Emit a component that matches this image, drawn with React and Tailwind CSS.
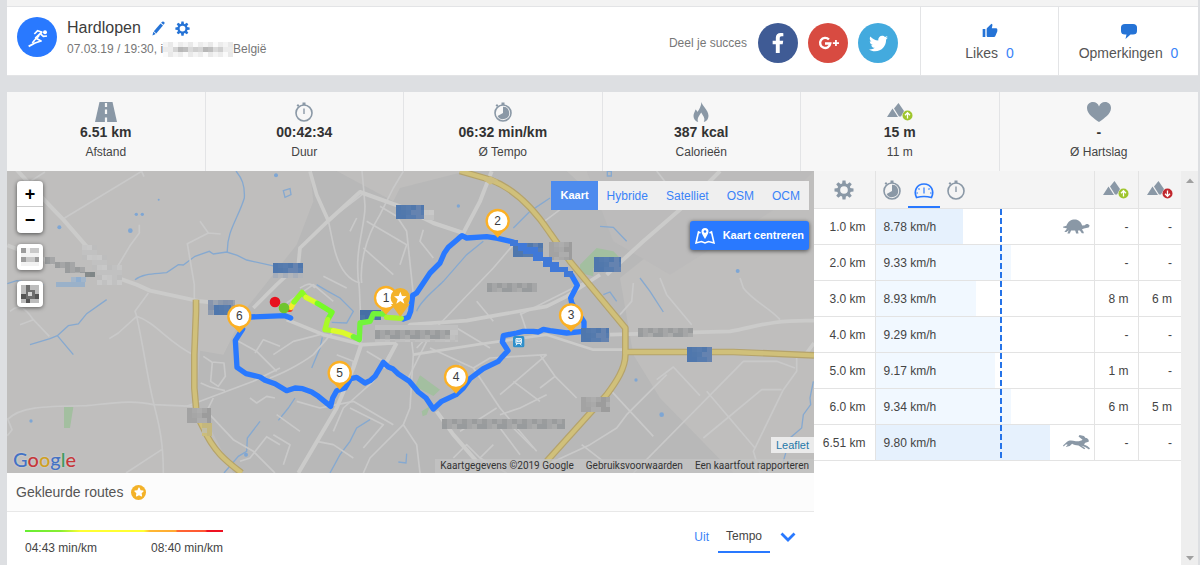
// App.jsx - activity detail page: header, key figures, route map and splits table
import React from "react";
import { FaFacebookF, FaTwitter, FaStar } from "react-icons/fa";
import { MdThumbUp } from "react-icons/md";

const splits = [
  { km: "1.0 km", speed: "8.78 km/h", bar: 40, up: "-", down: "-", animal: "turtle" },
  { km: "2.0 km", speed: "9.33 km/h", bar: 62, up: "-", down: "-" },
  { km: "3.0 km", speed: "8.93 km/h", bar: 46, up: "8 m", down: "6 m" },
  { km: "4.0 km", speed: "9.29 km/h", bar: 58, up: "-", down: "-" },
  { km: "5.0 km", speed: "9.17 km/h", bar: 55, up: "1 m", down: "-" },
  { km: "6.0 km", speed: "9.34 km/h", bar: 62, up: "6 m", down: "5 m" },
  { km: "6.51 km", speed: "9.80 km/h", bar: 80, up: "-", down: "-", animal: "hare" },
];

/* ---------- icons ---------- */

const GearIcon = ({ className }) => (
  <svg viewBox="0 0 24 24" className={className} aria-hidden="true">
    <circle cx="12" cy="12" r="6.4" fill="none" stroke="currentColor" strokeWidth="3.6" />
    {[0, 45, 90, 135, 180, 225, 270, 315].map((deg) => (
      <path
        key={deg}
        d="M9.6 5L10.2 0.6H13.8L14.4 5Z"
        fill="currentColor"
        transform={`rotate(${deg} 12 12)`}
      />
    ))}
  </svg>
);

const PencilIcon = ({ className }) => (
  <svg viewBox="0 0 14 16" className={className} fill="currentColor" aria-hidden="true">
    <path d="M11 0.6Q12.200 0 13.200 1Q14 2 13.300 2.900L12.300 4L9.800 1.800Z" />
    <path d="M9.200 2.500L11.800 4.800L4.600 13.300L2 11Z" />
    <path d="M1.500 11.600L4 13.900L0.500 15.500Z" />
  </svg>
);

const RunnerIcon = ({ className }) => (
  <svg
    viewBox="50 50 120 120"
    className={className}
    fill="none"
    stroke="#fff"
    strokeWidth="5"
    strokeLinejoin="round"
    aria-hidden="true"
  >
    <circle cx="134" cy="96" r="6" fill="#fff" stroke="none" />
    <path d="M102 101L112 91L126 96" />
    <path d="M125 95L106 113L122 122L104 128L85 138" strokeWidth="5.5" />
    <path d="M116 107L103 119L96 128" />
    <path d="M121 101L129 108L140 107" />
  </svg>
);

const RoadIcon = ({ className }) => (
  <svg viewBox="0 0 22 20" className={className} aria-hidden="true">
    <path d="M4.5 0H17.5L22 20H0Z" fill="currentColor" />
    <path d="M11 1V5M11 7.5V12M11 15.5V20" stroke="#f7f7f7" strokeWidth="2.2" />
  </svg>
);

const StopwatchIcon = ({ className, filled }) => (
  <svg viewBox="0 0 18 20" className={className} aria-hidden="true">
    <circle cx="9" cy="11" r="8" fill="none" stroke="currentColor" strokeWidth="1.6" />
    <path d="M7.5 0.5H10.5V3H7.5ZM1.5 3.4L3 2L4.4 3.4L3 4.8Z" fill="currentColor" />
    {filled ? (
      <path d="M9 4.8A6.2 6.2 0 1 1 3.6 14L9 11Z" fill="currentColor" />
    ) : (
      <path d="M9 6.5V12" stroke="currentColor" strokeWidth="1.4" />
    )}
  </svg>
);

const FlameIcon = ({ className }) => (
  <svg viewBox="0 0 16 20" className={className} fill="currentColor" aria-hidden="true">
    <path d="M8.5 0C9 4 15.5 8 15.5 14C15.5 17 13.5 19.4 10.8 20C12.4 16.5 10.6 14.4 8.2 10.5C6 14 3.6 16.8 5.2 20C2.3 19.2 0.5 17 0.5 14C0.5 11.5 1.8 10 2.5 7.5C3.6 8.2 4.2 9 4.3 10C6.5 7.5 8 4 8.5 0Z" />
  </svg>
);

const HeartIcon = ({ className }) => (
  <svg viewBox="0 0 24 20" className={className} fill="currentColor" aria-hidden="true">
    <path d="M12 20C7 16.5 0 12 0 6C0 2.5 2.5 0 6 0C9 0 11 1.6 12 4.5C13 1.6 15 0 18 0C21.5 0 24 2.5 24 6C24 12 17 16.5 12 20Z" />
  </svg>
);

const MountainIcon = ({ className, down }) => (
  <svg viewBox="0 0 26 18" className={className} aria-hidden="true">
    <path d="M0 14L5.5 5.5L11 14ZM7 5.5L11.5 0L17 8L14 13.5H12Z" fill="#8a98a6" />
    <circle cx="20.5" cy="12.5" r="5" fill={down ? "#c1272d" : "#9fc52d"} />
    <path
      d={down ? "M20.5 9.5V15M18 12.8L20.5 15.3L23 12.8" : "M20.5 15.5V10M18 12.2L20.5 9.7L23 12.2"}
      stroke="#fff"
      strokeWidth="1.3"
      fill="none"
    />
  </svg>
);

const GaugeIcon = ({ className }) => (
  <svg viewBox="0 0 20 16" className={className} fill="none" stroke="currentColor" aria-hidden="true">
    <path
      d="M2.5 14.5C-0.5 8 2.5 1 10 1C17.5 1 20.5 8 17.5 14.5Q10 12.5 2.5 14.5Z"
      strokeWidth="1.7"
    />
    <path d="M10 4.5V10.500M4.5 5.5L5.5 6.5M15.5 5.5L14.5 6.5M2.5 10H4M16 10H17.5" strokeWidth="1.2" />
  </svg>
);

const TurtleIcon = ({ className }) => (
  <svg viewBox="0 0 80 44" className={className} fill="currentColor" role="img" aria-label="Langzaamste">
    <path d="M0 23L10 20C15 6 24 1 35 1C46 1 53 8 57 19L65 18C68 13 76 14 79 20L76 25L62 28L56 31L60 36L62 42H56L50 34L44 34L46 43H39L36 34H24L20 43H13L17 33L10 38H4L12 28L0 25Z" />
  </svg>
);

const HareIcon = ({ className }) => (
  <svg viewBox="0 0 80 44" className={className} fill="currentColor" role="img" aria-label="Snelste">
    <path d="M0 31L12 20C18 14 28 16 38 18C46 19 52 18 58 14L46 4L49 0L62 3L67 9C73 9 78 15 76 20L66 23L62 28L72 32L80 39L77 43L67 36L54 31L66 39L63 42L46 31C38 30 32 30 27 26L20 32L8 35L14 29L9 27L2 34Z" />
  </svg>
);

const MapPinIcon = ({ className }) => (
  <svg viewBox="0 0 20 18" className={className} fill="none" stroke="#fff" strokeWidth="1.6" aria-hidden="true">
    <path d="M5.5 6L3.5 5L1 16L6.5 14.5L10 16L13.5 14.5L19 16L16.5 5L14.5 6" />
    <path d="M10 12C8.5 9 6.5 7 6.5 4.5A3.5 3.5 0 0 1 13.5 4.5C13.5 7 11.5 9 10 12Z" fill="#fff" stroke="none" />
    <circle cx="10" cy="4.5" r="1.3" fill="#2979ff" stroke="none" />
  </svg>
);

// Grid of flat squares that hides place names and road numbers
const Mosaic = ({ x, y, w, h, cell = 15, colors }) => {
  const cells = [];
  for (let r = 0; r * cell < h; r++) {
    for (let c = 0; c * cell < w; c++) {
      cells.push(
        <rect
          key={`${r}-${c}`}
          x={x + c * cell}
          y={y + r * cell}
          width={Math.min(cell, w - c * cell)}
          height={Math.min(cell, h - r * cell)}
          fill={colors[(r * 5 + c * 3 + ((r * c) % 4)) % colors.length]}
        />
      );
    }
  }
  return <g shapeRendering="crispEdges">{cells}</g>;
};

const BLUE = ["#4f77ad", "#577caf", "#6583b0", "#547aad", "#5178ac"];
const GREY = ["#a3a3a3", "#adadad", "#9c9c9c", "#a9a9a9", "#a6a6a6"];
const LABEL = ["#9a9c9d", "#abacac", "#939698", "#a5a6a7", "#b2b2b2", "#989b9d"];
const PALE = ["#c6c6c6", "#c1c1c1", "#bdbdbd", "#c8c8c8"];

/* ---------- map drawing ---------- */

const KmMarker = ({ x, y, label }) => (
  <g>
    <path d={`M${x - 26} ${y + 22}L${x} ${y + 50}L${x + 26} ${y + 22}Z`} fill="#fbb024" />
    <circle cx={x} cy={y} r="33" fill="#fff" stroke="#fbb024" strokeWidth="7" />
    <text x={x} y={y + 12} fontSize="36" textAnchor="middle" fill="#3c3c3c">
      {label}
    </text>
  </g>
);

const RouteMap = () => (
  <svg
    viewBox="21 9 2421 906"
    preserveAspectRatio="xMidYMid slice"
    className="block h-full w-full"
    role="img"
    aria-label="Kaart met route"
  >
    <rect x="-1000" y="-1000" width="5000" height="3000" fill="#bfbebd" />
    {/* built-up area */}
    <path
      d="M835 300L740 420L670 560L600 548L590 700L700 915H2200L1980 690L1900 560L1860 330L1960 250L1700 9H1400L1200 60L1180 100L1010 9H930L940 100L890 230Z"
      fill="#b8b8b8"
    />
    <path d="M2010 320L2330 120L2442 9H1760L1840 220Z" fill="#bcbbbb" />

    {/* parks */}
    <g fill="#a3bfa0">
      <path d="M192 717H220L210 780H192Z" />
      <path d="M1260 622L1320 665L1300 684L1245 655ZM1265 730L1290 715L1280 740L1268 745Z" />
      <path d="M1740 290L1790 240L1840 250L1860 270L1780 300L1780 325L1740 315Z" />
    </g>

    {/* water */}
    <g fill="none" stroke="#86a9d0" strokeWidth="4">
      <path d="M708 9C725 30 735 50 733 90C715 150 680 190 682 252" />
      <path d="M405 335C430 315 470 318 500 314L535 290L550 291L585 265L628 250L640 258L680 252L712 262L740 276L830 296" />
      <path d="M90 530L150 512L172 503L205 473L235 468L260 437L320 395M172 503L220 560" />
      <path d="M22 347L50 338L130 350" />
      <path d="M950 350L980 368L1020 390L1060 430L1040 465L995 463M967 508L960 540L935 600M885 690L865 720L835 757" />
      <path d="M1250 430C1260 400 1300 370 1330 340L1400 260L1450 220M1540 180L1590 130L1650 90" />
      <path d="M1110 755L1070 780L1050 820L1020 860L990 915M1220 857L1218 885L1195 882" />
      <path d="M1800 175L1840 178L1880 220M1920 330L1950 370L1990 432M1810 380L1830 372L1850 400" />
      <path d="M2440 640L2430 690L2432 710L2410 740L2405 780L2370 810L2350 880" />
      <path d="M672 915L715 865L740 850L742 810L780 760" />
      <path d="M850 68L870 62L873 80L855 88ZM1822 10h12v14h-12Z" />
    </g>
    <g fill="#7ea6d4">
      <circle cx="178" cy="178" r="6" />
      <circle cx="409" cy="139" r="5" />
      <circle cx="427" cy="139" r="5" />
      <circle cx="391" cy="188" r="7" />
      <circle cx="476" cy="95" r="3" />
      <circle cx="93" cy="759" r="5" />
      <circle cx="828" cy="22" r="6" />
      <circle cx="1375" cy="114" r="5" />
      <circle cx="2213" cy="309" r="6" />
      <circle cx="1985" cy="740" r="7" />
      <circle cx="1908" cy="636" r="5" />
      <circle cx="738" cy="860" r="6" />
    </g>

    {/* minor roads */}
    <g fill="none" stroke="#c9c9c9" strokeWidth="5" strokeLinejoin="round">
      <path d="M60 60L135 12M190 152L425 10L432 26M418 170V195L392 230L350 300M600 160L625 195L662 198M625 195L562 227L583 350V395" />
      <path d="M445 375L405 430L410 445L355 495L328 512M410 445C470 465 500 520 580 560M410 445C435 560 440 620 462 710C480 780 490 830 490 915M485 845L378 915M30 430C60 405 75 420 100 455L148 505M60 470L100 455" />
      <path d="M22 755C60 715 130 715 260 713C340 705 400 695 460 710L580 715M22 750L36 785L22 803" />
      <path d="M610 565L635 582L672 585L676 625L655 655L632 640L637 582M602 645L630 657L675 668M715 520L770 550L830 610M765 555L790 515L840 535M840 600L760 640L560 715" />
      <path d="M640 690L620 730L700 815L760 850L825 915M720 880L750 870L800 806L840 830M750 690L770 705L800 685L825 690" />
      <path d="M985 158L1060 100L1092 75L1086 9M1092 75L1095 115C1095 180 1060 250 1078 360L1085 520M1210 10L1180 60L1140 140C1090 220 1080 300 1085 345M1100 160L1220 230L1200 290M1070 150L1050 190M1090 240L1180 320M985 158L1000 230C1020 320 1060 340 1080 345" />
      <path d="M1140 115L1190 145L1220 190L1240 380M1270 185L1260 220L1300 270M900 360C920 350 930 340 945 360M860 405L940 350L1000 400M970 325L1040 360M1000 490L940 560C900 590 840 620 810 630M890 700L960 720L1060 700L1180 770M820 560L880 520L960 500" />
      <path d="M1010 560L1060 580L1050 640M1100 550L1150 580M1180 540L1120 640L1030 720L1000 790M1230 480L1240 560L1230 720L1210 770L1110 870L1090 915M1210 770L1250 830L1260 915M1050 720L1150 770L1090 840M950 820L1000 830L1060 870M820 800L870 830L850 890M830 740L900 790" />
      <path d="M1300 480L1250 580L1220 640M1290 540L1420 600L1500 720L1610 850M1420 600L1470 570L1640 560M1500 680L1640 560M1490 720L1380 790M1380 590L1340 650M1540 640L1620 700M1500 740L1560 720L1640 680M1470 540L1370 480" />
      <path d="M1540 230L1480 300L1250 540M1600 260L1640 290M1430 400L1480 460M1560 430L1580 490M1560 440L1760 340M1360 870L1400 830L1470 900M1480 830L1440 870L1520 915M1500 780L1560 860M1520 760L1600 840" />
      <path d="M1620 170L1700 110L1770 40M1970 9L2010 60L2060 100M1900 345L1895 400L1860 440M1980 330L2000 380L2075 470M2220 330L2230 360C2260 400 2310 420 2340 455" />
      <path d="M1620 560L1665 625L1730 690M1620 660L1665 625M1830 665L1960 805M1900 915L2230 580H2330L2385 600M1970 635L2020 597L2100 683M2120 670L2265 840M2110 810L2285 665H2345M2390 570V610L2350 665L2260 850L2280 915M1745 830L1810 880M1640 890L1770 830L1850 780L1880 740L2000 620" />
    </g>

    {/* main roads */}
    <g fill="none" stroke="#cbcbca" strokeLinejoin="round">
      <path d="M50 5C100 60 130 95 190 155L290 270L340 325L410 350L450 368L600 400L690 408M22 232L160 285" strokeWidth="12" />
      <path d="M930 10L950 80L985 158L900 240L895 290L830 350L760 420" strokeWidth="11" />
      <path d="M985 158L1080 72L1200 115L1300 165L1390 195L1440 100L1475 10" strokeWidth="12" />
      <path d="M860 455L970 500L1090 530L1180 525L1230 470L1400 458L1500 440L1640 415L1700 385L1800 320" strokeWidth="11" />
      <path d="M1085 525L1060 600L1010 720L895 915M1190 525L1150 600" strokeWidth="12" />
      <path d="M1240 560L1430 530L1640 500L1780 545H1870" strokeWidth="8" />
      <path d="M1820 320L1930 220L2080 90L2160 9" strokeWidth="12" />
      <path d="M1830 500L2190 490C2260 480 2300 455 2442 458M2420 555L2442 525" strokeWidth="11" />
      <path d="M1310 730L1360 800L1430 880" strokeWidth="12" />
    </g>

    {/* highways */}
    <g fill="none" strokeLinejoin="round">
      <g stroke="#b5a36b" strokeWidth="20">
        <path d="M588 395V430L583 560V660L590 740L610 780C640 850 680 880 725 915" />
        <path d="M1380 9L1470 35C1540 60 1600 120 1650 195L1710 280L1876 480V560C1876 600 1850 640 1820 680L1640 880" />
        <path d="M1870 552H2200L2442 562" />
      </g>
      <g stroke="#d0c07a" strokeWidth="13">
        <path d="M588 395V430L583 560V660L590 740L610 780C640 850 680 880 725 915" />
        <path d="M1380 9L1470 35C1540 60 1600 120 1650 195L1710 280L1876 480V560C1876 600 1850 640 1820 680L1640 880" />
        <path d="M1870 552H2200L2442 562" />
      </g>
    </g>
    <path d="M1450 35L1470 25L1495 37L1470 50Z" fill="#cdbd80" />

    {/* hidden place names */}
    <Mosaic x={245} y={230} w={45} h={45} colors={PALE} />
    <Mosaic x={275} y={260} w={45} h={45} colors={PALE} />
    <Mosaic x={290} y={290} w={75} h={60} colors={PALE} />
    <Mosaic x={135} y={268} w={30} h={20} colors={LABEL} />
    <Mosaic x={165} y={283} w={60} h={16} colors={LABEL} />
    <Mosaic x={195} y={298} w={60} h={16} colors={LABEL} />
    <Mosaic x={255} y={312} w={30} h={15} colors={["#858a8b", "#7f8687"]} />
    <Mosaic x={167} y={342} w={88} h={15} colors={["#9ab1c9", "#a0b5cb", "#91acca"]} />
    <Mosaic x={212} y={327} w={45} h={15} colors={["#a3b6ca", "#8faed0"]} />
    <Mosaic x={625} y={397} w={80} h={43} colors={["#8795ad", "#8493ac", "#8c99ad", "#9aa3b1"]} />
    <Mosaic x={642} y={412} w={50} h={28} colors={BLUE} />
    <Mosaic x={560} y={720} w={74} h={45} colors={GREY} />
    <Mosaic x={605} y={765} w={30} h={38} colors={["#c4b77d", "#cbbd7c", "#c1bda5"]} />
    <Mosaic x={820} y={285} w={88} h={30} colors={BLUE} />
    <Mosaic x={820} y={315} w={88} h={15} colors={["#a7aeb9", "#b2b5ba"]} />
    <Mosaic x={1188} y={110} w={84} h={44} colors={BLUE} />
    <Mosaic x={1272} y={125} w={30} h={30} colors={PALE} />
    <Mosaic x={1080} y={426} w={64} h={30} colors={["#456fa5", "#6f8eaa", "#4b76a8"]} />
    <Mosaic x={1125} y={471} w={250} h={50} colors={["#c0c0c0", "#bcbcbc", "#c3c3c3"]} />
    <Mosaic x={1125} y={486} w={225} h={26} colors={LABEL} />
    <Mosaic x={1462} y={345} w={148} h={28} colors={LABEL} />
    <Mosaic x={1325} y={754} w={370} h={28} colors={LABEL} />
    <Mosaic x={1647} y={222} w={70} h={55} colors={GREY} />
    <Mosaic x={1782} y={267} w={82} h={44} colors={BLUE} />
    <Mosaic x={1915} y={480} w={165} h={28} colors={LABEL} />
    <Mosaic x={2062} y={538} w={74} h={43} colors={BLUE} />
    <Mosaic x={1743} y={688} w={88} h={44} colors={GREY} />
    <Mosaic x={1540} y={225} w={90} h={42} colors={BLUE} />

    {/* route without colouring */}
    <g fill="none" stroke="#2979ff" strokeWidth="16" strokeLinejoin="round" strokeLinecap="round">
      <path d="M872 450L855 443L750 447M728 483L706 517L711 598L738 617L780 627L795 637L825 647L860 668L885 660L908 662L935 672L955 685L992 715L998 690L1010 668L1035 660L1052 632L1070 628L1095 645L1110 638L1125 625L1150 583L1165 597L1178 602L1195 618L1228 640L1255 672L1278 690L1300 723L1325 700L1368 680L1390 660L1410 632L1450 602L1495 580L1505 568L1524 548L1507 522L1510 503L1550 495L1570 490L1600 490L1615 492L1630 484L1650 488L1700 495L1752 490V462L1715 405L1712 390L1732 352L1715 322" />
      <path d="M1540 222L1493 211L1460 206L1400 210L1386 203L1375 212L1345 238L1333 255L1320 285L1290 315L1250 375L1238 382L1232 430L1225 448L1210 453" />
    </g>
    <g fill="#4079d8" shapeRendering="crispEdges">
      <rect x="1530" y="215" width="25" height="20" />
      <rect x="1555" y="225" width="25" height="25" />
      <rect x="1570" y="237" width="45" height="20" />
      <rect x="1600" y="252" width="30" height="28" />
      <rect x="1630" y="268" width="25" height="28" />
      <rect x="1650" y="283" width="27" height="28" />
      <rect x="1677" y="297" width="28" height="15" />
      <rect x="1692" y="310" width="28" height="18" />
    </g>
    <Mosaic x={1742} y={480} w={84} h={43} colors={BLUE} />

    {/* coloured first kilometre */}
    <g fill="none" strokeWidth="16" strokeLinecap="round" strokeLinejoin="round">
      <path d="M865 424L870 424" stroke="#f33b25" />
      <path d="M873 418L882 402" stroke="#f4ec2b" />
      <path d="M882 402L906 373L918 388" stroke="#8dfa26" />
      <path d="M918 388L950 405" stroke="#d8fb2a" />
      <path d="M952 406L996 433L985 452" stroke="#75fb27" />
      <path d="M983 455L975 485L1000 488" stroke="#a9fb28" />
      <path d="M1000 488L1030 494L1060 506" stroke="#dcfb2b" />
      <path d="M1060 506L1078 515L1080 465L1110 460L1120 437L1152 438" stroke="#72f53a" />
      <path d="M1160 448L1204 451" stroke="#a6f52c" />
    </g>
    <circle cx="825" cy="402" r="16" fill="#e8121f" />
    <circle cx="852" cy="420" r="16" fill="#6fc52f" />

    {/* railway station */}
    <g>
      <rect x="1539" y="504" width="34" height="34" rx="5" fill="#2e8fcb" />
      <path d="M1548 512H1564V526H1548ZM1551 516H1561V521H1551ZM1548 532L1552 527M1564 532L1560 527" fill="none" stroke="#fff" strokeWidth="3" />
    </g>

    <KmMarker x={1158} y={390} label="1" />
    <path d="M1173 408L1201 447L1229 408Z" fill="#f3b229" />
    <circle cx="1201" cy="389" r="29" fill="#f3b229" />
    <path d="M1201 371L1206 384L1220 385L1209 394L1213 407L1201 399L1189 407L1193 394L1182 385L1196 384Z" fill="#fff" />
    <KmMarker x={1493} y={159} label="2" />
    <KmMarker x={1713} y={442} label="3" />
    <KmMarker x={1368} y={627} label="4" />
    <KmMarker x={1019} y={615} label="5" />
    <KmMarker x={718} y={445} label="6" />
  </svg>
);

const mapTypes = ["Kaart", "Hybride", "Satelliet", "OSM", "OCM"];

const MapPanel = () => (
  <section className="relative h-[302px] overflow-hidden bg-[#bfbebd]">
    <RouteMap />

    {/* zoom + view controls */}
    <div className="absolute top-2.5 left-2.5 flex w-[26px] flex-col gap-[11px]">
      <div className="flex flex-col overflow-hidden rounded bg-white shadow-[0_1px_4px_rgba(0,0,0,0.6)]">
        <button className="h-[26px] border-b border-[#ccc] text-lg/6 font-bold text-black" aria-label="Inzoomen">
          +
        </button>
        <button className="h-[26px] text-lg/6 font-bold text-black" aria-label="Uitzoomen">
          −
        </button>
      </div>
      <button className="h-[26px] rounded bg-white p-1 shadow-[0_1px_4px_rgba(0,0,0,0.5)]" aria-label="Volledig scherm">
        <svg viewBox="0 0 60 60" className="h-[18px] w-[18px]" shapeRendering="crispEdges" aria-hidden="true">
          <rect width="60" height="60" fill="#f2f2f2" />
          <path d="M0 0H15V15H0ZM0 30H15V45H0ZM45 30H60V45H45Z" fill="#9c9c9c" />
          <path d="M30 0H60V15H30ZM30 30H45V45H30ZM15 30H30V45H15Z" fill="#c9c9c9" />
        </svg>
      </button>
      <button className="h-[26px] rounded bg-white p-1 shadow-[0_1px_4px_rgba(0,0,0,0.5)]" aria-label="Instellingen kaart">
        <svg viewBox="0 0 60 60" className="h-[18px] w-[18px]" shapeRendering="crispEdges" aria-hidden="true">
          <rect width="60" height="60" fill="#bdbdbd" />
          <path d="M15 0H30V15H45V45H30V60H15V45H0V30H15V15H15Z" fill="#6e6e6e" />
          <path d="M0 30H15V45H0ZM15 45H30V60H15ZM45 30H60V45H45Z" fill="#555" />
          <path d="M22 22H38V38H22Z" fill="#d6d6d6" />
        </svg>
      </button>
    </div>

    <div className="absolute top-2.5 right-[5px] flex flex-col items-end gap-[11px]">
      <div className="flex bg-[#efefef] text-xs">
        {mapTypes.map((type, i) => (
          <button
            key={type}
            className={
              i === 0
                ? "h-[29px] bg-[#4d8bee] px-[9px] text-[11px] font-bold text-white"
                : "h-[29px] px-[9px] text-[#3a83f8]"
            }
          >
            {type}
          </button>
        ))}
      </div>
      <button className="flex h-[29px] items-center gap-2 rounded-[3px] bg-[#2979ff] px-[5px] text-[11px] font-bold text-white shadow-[0_1px_4px_rgba(0,0,0,0.6)]">
        <MapPinIcon className="h-[18px] w-5" />
        Kaart centreren
      </button>
    </div>

    <a
      href="#google"
      className="absolute bottom-0.5 left-1.5 font-[Lato,sans-serif] text-xl/6 font-medium [text-shadow:0_0_2px_#ddd]"
    >
      <span className="text-[#4472c4]">G</span>
      <span className="text-[#c5373a]">o</span>
      <span className="text-[#cf9f22]">o</span>
      <span className="text-[#4472c4]">g</span>
      <span className="text-[#3f9b60]">l</span>
      <span className="text-[#c5373a]">e</span>
    </a>
    <a
      href="#leaflet"
      className="absolute right-0 bottom-5 bg-[#ebebeb] px-[5px] text-[11px]/4 text-[#1f78a8]"
    >
      Leaflet
    </a>
    <div className="absolute right-0 bottom-0 flex gap-3 bg-[#c4c4c4]/70 px-[5px] font-[Roboto,sans-serif] text-[10px]/[14px] text-[#333]">
      <span>Kaartgegevens ©2019 Google</span>
      <a href="#voorwaarden">Gebruiksvoorwaarden</a>
      <a href="#fout">Een kaartfout rapporteren</a>
    </div>
  </section>
);

/* ---------- page parts ---------- */

const Header = () => (
  <header className="flex h-[70px] border-y border-[#e3e4e6] bg-white">
    <div className="flex flex-1 gap-2.5 pt-2.5 pl-2.5">
      <div className="h-10 w-10 rounded-full bg-[#2979ff]">
        <RunnerIcon className="h-10 w-10" />
      </div>
      <div>
        <div className="flex h-[22px] items-center">
          <h1 className="text-base text-[#3c3c3c]">Hardlopen</h1>
          <button className="ml-[11px] text-[#2573d6]" aria-label="Bewerken">
            <PencilIcon className="h-[15px] w-[13px]" />
          </button>
          <button className="ml-2.5 text-[#2573d6]" aria-label="Instellingen">
            <GearIcon className="h-[15px] w-[15px]" />
          </button>
        </div>
        <p className="flex h-5 items-center text-xs text-[#777]">
          <span>07.03.19 / 19:30, i</span>
          <svg viewBox="0 0 210 45" className="h-[15px] w-[70px]" aria-hidden="true">
            <Mosaic x={0} y={0} w={210} h={45} colors={["#f4f4f4", "#ececec", "#fafafa", "#e9e9e9"]} />
            <Mosaic x={30} y={15} w={150} h={15} colors={["#d5d5d5", "#bfbfbf", "#cfcfcf", "#b8b8b8", "#dadada"]} />
          </svg>
          <span>België</span>
        </p>
      </div>
    </div>
    <div className="flex items-center gap-2.5 pt-1 pr-[22px]">
      <span className="mr-px text-xs text-[#777]">Deel je succes</span>
      <button className="flex h-10 w-10 items-center justify-center rounded-full bg-[#3f5b95] text-white" aria-label="Facebook">
        <FaFacebookF size={20} />
      </button>
      <button className="flex h-10 w-10 items-center justify-center rounded-full bg-[#d84b41]" aria-label="Google Plus">
        <svg viewBox="0 0 24 16" className="h-[14px] w-[21px]" fill="none" stroke="#fff" strokeWidth="2.8" aria-hidden="true">
          <path d="M12.5 4A5.8 5.8 0 1 0 14 8.5H8" />
          <path d="M20.5 4.5V11.5M17 8H24" strokeWidth="2" />
        </svg>
      </button>
      <button className="flex h-10 w-10 items-center justify-center rounded-full bg-[#43aade] text-white" aria-label="Twitter">
        <FaTwitter size={19} />
      </button>
    </div>
    <button className="flex w-[138px] flex-col items-center gap-1 border-l border-[#e3e4e6] pt-4 text-sm/5 text-[#555]">
      <MdThumbUp size={16} className="text-[#2573d6]" />
      <span>
        Likes <span className="ml-1 text-[#3a83f8]">0</span>
      </span>
    </button>
    <button className="flex w-[140px] flex-col items-center gap-1 border-l border-[#e3e4e6] pt-4 text-sm/5 text-[#555]">
      <svg viewBox="0 0 16 16" className="h-4 w-4 text-[#2573d6]" fill="currentColor" aria-hidden="true">
        <path d="M4 1H12Q16 1 16 4.5V8Q16 11.500 12 11.500H9.500L4.500 16L5.500 11.500H4Q0 11.500 0 8V4.500Q0 1 4 1Z" />
      </svg>
      <span>
        Opmerkingen <span className="ml-1 text-[#3a83f8]">0</span>
      </span>
    </button>
  </header>
);

const stats = [
  { icon: <RoadIcon className="h-5 w-[22px]" />, value: "6.51 km", label: "Afstand" },
  { icon: <StopwatchIcon className="h-5 w-[18px]" />, value: "00:42:34", label: "Duur" },
  { icon: <StopwatchIcon filled className="h-5 w-[18px]" />, value: "06:32 min/km", label: "Ø Tempo" },
  { icon: <FlameIcon className="h-5 w-4" />, value: "387 kcal", label: "Calorieën" },
  { icon: <MountainIcon className="h-[18px] w-[26px]" />, value: "15 m", label: "11 m" },
  { icon: <HeartIcon className="h-5 w-6" />, value: "-", label: "Ø Hartslag" },
];

const StatsBar = () => (
  <section className="grid grid-cols-6 divide-x divide-[#e3e4e6] bg-[#f7f7f7]">
    {stats.map((s) => (
      <div key={s.label} className="flex flex-col items-center pt-2.5 pb-[9px] text-center">
        <div className="flex h-5 items-center text-[#8a98a6]">{s.icon}</div>
        <strong className="text-sm/5 text-[#333]">{s.value}</strong>
        <span className="text-xs/5 text-[#444]">{s.label}</span>
      </div>
    ))}
  </section>
);

const ColoredRoutes = () => (
  <section className="flex-1 bg-white">
    <h2 className="flex h-[39px] items-center gap-2 border-b border-[#e8e8e8] bg-[#fcfcfc] pl-[9px] text-sm text-[#555]">
      Gekleurde routes
      <span className="flex h-[15px] w-[15px] items-center justify-center rounded-full bg-[#f3b229] text-white">
        <FaStar size={10} />
      </span>
    </h2>
    <div className="flex items-start justify-between px-[18px] text-xs text-[#444]">
      <div className="w-[198px] pt-[18px]">
        <div className="h-0.5 bg-[linear-gradient(to_right,#66ee33_0%,#88ee33_18%,#ffff33_28%,#ffff33_60%,#ffb833_63%,#ffa933_76%,#ff6633_77%,#ff5533_91%,#ee1122_92%)]" />
        <div className="mt-2 flex justify-between">
          <span>04:43 min/km</span>
          <span>08:40 min/km</span>
        </div>
      </div>
      <div className="flex items-center pt-2">
        <button className="h-8 px-[9px] text-[#3a83f8]">Uit</button>
        <button className="h-[33px] border-b-2 border-[#2979ff] px-2">Tempo</button>
        <button className="ml-2.5 text-[#2979ff]" aria-label="Meer">
          <svg viewBox="0 0 16 12" className="h-3 w-4" fill="none" stroke="currentColor" strokeWidth="2.8" aria-hidden="true">
            <path d="M1.5 2.5L8 9L14.5 2.5" />
          </svg>
        </button>
      </div>
    </div>
  </section>
);

const SplitsTable = () => (
  <aside className="flex w-96 shrink-0 bg-white">
    <div className="flex-1">
      <table className="w-full table-fixed border-collapse text-xs text-[#444]">
        <colgroup>
          <col className="w-[61px]" />
          <col />
          <col className="w-11" />
          <col className="w-[43px]" />
        </colgroup>
        <thead className="bg-[#f4f4f4]">
          <tr className="border-b border-[#e3e3e3]">
            <th className="border-r border-[#e3e3e3] p-0">
              <button className="block w-full text-[#8a98a6]" aria-label="Instellingen tabel">
                <GearIcon className="mx-auto h-5 w-5" />
              </button>
            </th>
            <th className="border-r border-[#e3e3e3] p-0">
              <div className="flex text-[#8a98a6]">
                <button className="flex h-[37px] w-8 items-center justify-center" aria-label="Tempo">
                  <StopwatchIcon filled className="h-5 w-[18px]" />
                </button>
                <button
                  className="flex h-[37px] w-8 items-center justify-center border-b-2 border-[#2979ff] pt-1 text-[#2979ff]"
                  aria-label="Snelheid"
                >
                  <GaugeIcon className="h-4 w-5" />
                </button>
                <button className="flex h-[37px] w-8 items-center justify-center" aria-label="Duur">
                  <StopwatchIcon className="h-5 w-[18px]" />
                </button>
              </div>
            </th>
            <th className="border-r border-[#e3e3e3] p-0">
              <MountainIcon className="mx-auto h-[18px] w-[26px]" />
            </th>
            <th className="p-0">
              <MountainIcon down className="mx-auto h-[18px] w-[26px]" />
            </th>
          </tr>
        </thead>
        <tbody>
          {splits.map((row) => (
            <tr key={row.km} className="border-b border-[#e3e3e3]">
              <td className="border-r border-[#e3e3e3] p-0 pr-[9px] text-right whitespace-nowrap">{row.km}</td>
              <td className="border-r border-[#e3e3e3] p-0">
                <div className="relative flex h-[35px] items-center justify-between pr-1 pl-2">
                  <div
                    className={row.animal ? "absolute inset-y-0 left-0 bg-[#e6f1fd]" : "absolute inset-y-0 left-0 bg-[#f1f8ff]"}
                    style={{ width: `${row.bar}%` }}
                  />
                  {/* average speed */}
                  <div className="absolute inset-y-0 left-[57%] w-0.5 bg-[repeating-linear-gradient(to_bottom,#2573e8_0px,#2573e8_6px,transparent_6px,transparent_9px)]" />
                  <span className="relative">{row.speed}</span>
                  {row.animal === "turtle" && <TurtleIcon className="relative h-[15px] w-[27px] text-[#8a98a6]" />}
                  {row.animal === "hare" && <HareIcon className="relative h-[15px] w-[27px] text-[#8a98a6]" />}
                </div>
              </td>
              <td className="border-r border-[#e3e3e3] p-0 pr-[9px] text-right">{row.up}</td>
              <td className="p-0 pr-[9px] text-right">{row.down}</td>
            </tr>
          ))}
        </tbody>
      </table>
    </div>
    <div className="flex w-[17px] flex-col items-center justify-between bg-[#eeeeee] pt-[7px] pb-1 text-[#a0a0a0]">
      <svg viewBox="0 0 8 5" className="h-[5px] w-2" fill="currentColor" aria-hidden="true">
        <path d="M0 5L4 0.5L8 5Z" />
      </svg>
      <svg viewBox="0 0 8 5" className="h-[5px] w-2" fill="currentColor" aria-hidden="true">
        <path d="M0 0L4 4.5L8 0Z" />
      </svg>
    </div>
  </aside>
);

const App = () => {
  return (
    <div className="flex min-h-screen flex-col bg-[#dddfe2] pr-0.5 pl-[7px] font-['Liberation_Sans',Arial,sans-serif]">
      <div className="h-1.5 bg-[#f3f3f3]" />
      <Header />
      <main className="mt-4 flex flex-1 flex-col">
        <StatsBar />
        <div className="flex flex-1">
          <div className="flex min-w-0 flex-1 flex-col">
            <MapPanel />
            <ColoredRoutes />
          </div>
          <SplitsTable />
        </div>
      </main>
    </div>
  );
};

export default App;
